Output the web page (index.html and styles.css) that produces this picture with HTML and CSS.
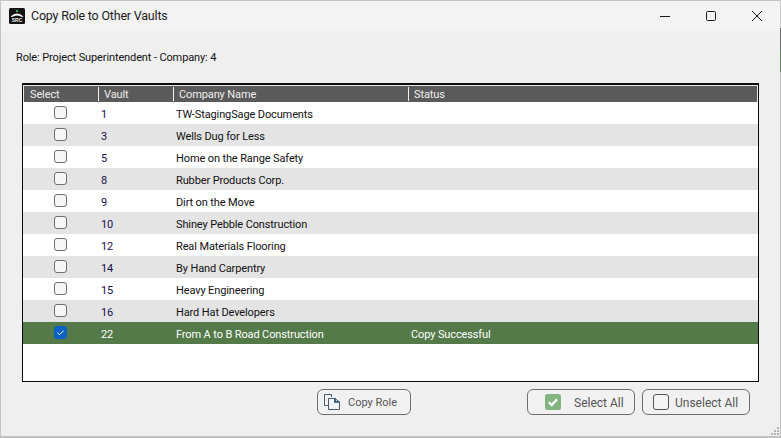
FILE: index.html
```html
<!DOCTYPE html>
<html lang="en">
<head>
<meta charset="utf-8">
<title>Copy Role to Other Vaults</title>
<link rel="stylesheet" href="styles.css">
</head>
<body>
<div class="window">
  <header class="titlebar">
    <svg class="logo" width="16" height="16" viewBox="0 0 16 16">
      <rect width="16" height="16" rx="1.5" fill="#141414"/>
      <rect x="7" y="2" width="2" height="2" fill="#35b04f"/>
      <path d="M1.5 8.5 Q8 2.5 14.5 8.5 L13 9 Q8 5.8 3 9Z" fill="#fff"/>
      <text class="logotext" x="8" y="14.2" text-anchor="middle">SRC</text>
    </svg>
    <span class="title">Copy Role to Other Vaults</span>
    <div class="controls">
      <svg class="ctl" width="12" height="12" viewBox="0 0 12 12"><path d="M1 6.5H11" stroke="#1a1a1a" stroke-width="1"/></svg>
      <svg class="ctl" width="12" height="12" viewBox="0 0 12 12"><rect x="1.5" y="1.5" width="9" height="9" rx="1" fill="none" stroke="#1a1a1a"/></svg>
      <svg class="ctl" width="12" height="12" viewBox="0 0 12 12"><path d="M1 1L11 11M11 1L1 11" stroke="#1a1a1a" stroke-width="1"/></svg>
    </div>
  </header>
  <main class="content">
    <p class="role">Role: Project Superintendent - Company: 4</p>
    <section class="grid">
      <div class="row head">
        <div class="hcell">Select</div>
        <div class="hcell sep">Vault</div>
        <div class="hcell sep">Company Name</div>
        <div class="hcell sep">Status</div>
      </div>
      <div class="row"><div class="cell chk"><span class="box"></span></div><div class="cell num">1</div><div class="cell name">TW-StagingSage Documents</div><div class="cell"></div></div>
      <div class="row alt"><div class="cell chk"><span class="box"></span></div><div class="cell num">3</div><div class="cell name">Wells Dug for Less</div><div class="cell"></div></div>
      <div class="row"><div class="cell chk"><span class="box"></span></div><div class="cell num">5</div><div class="cell name">Home on the Range Safety</div><div class="cell"></div></div>
      <div class="row alt"><div class="cell chk"><span class="box"></span></div><div class="cell num">8</div><div class="cell name">Rubber Products Corp.</div><div class="cell"></div></div>
      <div class="row"><div class="cell chk"><span class="box"></span></div><div class="cell num">9</div><div class="cell name">Dirt on the Move</div><div class="cell"></div></div>
      <div class="row alt"><div class="cell chk"><span class="box"></span></div><div class="cell num">10</div><div class="cell name">Shiney Pebble Construction</div><div class="cell"></div></div>
      <div class="row"><div class="cell chk"><span class="box"></span></div><div class="cell num">12</div><div class="cell name">Real Materials Flooring</div><div class="cell"></div></div>
      <div class="row alt"><div class="cell chk"><span class="box"></span></div><div class="cell num">14</div><div class="cell name">By Hand Carpentry</div><div class="cell"></div></div>
      <div class="row"><div class="cell chk"><span class="box"></span></div><div class="cell num">15</div><div class="cell name">Heavy Engineering</div><div class="cell"></div></div>
      <div class="row alt"><div class="cell chk"><span class="box"></span></div><div class="cell num">16</div><div class="cell name">Hard Hat Developers</div><div class="cell"></div></div>
      <div class="row selected"><div class="cell chk"><span class="box checked"><svg width="13" height="13" viewBox="0 0 13 13"><path d="M3.5 6.8L5.6 8.7L9.6 4.6" fill="none" stroke="#fff" stroke-width="1"/></svg></span></div><div class="cell num">22</div><div class="cell name">From A to B Road Construction</div><div class="cell status">Copy Successful</div></div>
    </section>
    <footer class="actions">
      <button class="btn copy" type="button">
        <svg width="16" height="16" viewBox="0 0 16 16"><path d="M7.5 3V0.5H0.5V11.5H4.5" fill="none" stroke="#4a5c6a" stroke-width="1"/><path d="M4.5 4.5H11L15.5 8V15.5H4.5Z" fill="#f4f4f4" stroke="#4a5c6a" stroke-width="1"/><path d="M11 4.5V8H15.5" fill="none" stroke="#12486e" stroke-width="1.6"/></svg>
        <span class="copylabel">Copy Role</span>
      </button>
      <button class="btn selectall" type="button">
        <svg width="16" height="16" viewBox="0 0 16 16"><rect width="16" height="16" rx="2.5" fill="#82b47f"/><path d="M3.8 8.2L6.7 11L12 5.4" fill="none" stroke="#fff" stroke-width="2.4"/></svg>
        <span class="label">Select All</span>
      </button>
      <button class="btn unselect" type="button">
        <span class="bigbox"></span>
        <span class="label">Unselect All</span>
      </button>
    </footer>
  </main>
  <svg class="grip" width="10" height="10" viewBox="0 0 10 10" fill="#b4b4b4"><rect x="7" y="1" width="2" height="2"/><rect x="4" y="4" width="2" height="2"/><rect x="7" y="4" width="2" height="2"/><rect x="1" y="7" width="2" height="2"/><rect x="4" y="7" width="2" height="2"/><rect x="7" y="7" width="2" height="2"/></svg>
</div>
</body>
</html>
```
FILE: styles.css
```css
* { box-sizing: border-box; }
html, body { margin: 0; height: 100%; overflow: hidden; }
body {
  background: linear-gradient(to bottom, #c8c8c8 0 28px, #6e6e6e 28px 50px, #5f8a5a 50px 72px, #c0c0c0 72px);
  font-family: Roboto, "Liberation Sans", sans-serif;
  font-size: 11px;
  letter-spacing: -0.12px;
  color: #111;
}
.window {
  position: relative;
  width: 780px; height: 437px;
  background: #efefef;
  border: 1px solid #c4c4c4;
  border-right: 0;
  display: flex; flex-direction: column;
}
.titlebar {
  height: 30px; flex: none;
  background: #f3f3f3;
  display: flex; align-items: center;
  padding-left: 8px;
}
.logo { margin-right: 6px; }
.logotext { font-family: "Liberation Sans", sans-serif; font-size: 5px; font-weight: 700; fill: #eee; letter-spacing: 0; }
.title { font-size: 12.5px; letter-spacing: -0.2px; color: #1c1c1c; padding-bottom: 2px; }
.controls { margin-left: auto; display: flex; gap: 34px; padding-right: 17px; }
.content { flex: 1; display: flex; flex-direction: column; padding: 0 21px; }
.role { margin: 19px 0 0 -6px; height: 15px; line-height: 15px; }
.grid {
  margin-top: 18px;
  height: 299px;
  background: #fff;
  border: 1px solid #0a0a0a;
  border-top-width: 2px;
  display: flex; flex-direction: column;
}
.row {
  display: grid;
  grid-template-columns: 75px 75px 235px 1fr;
  height: 22px; flex: none;
  align-items: center;
}
.head {
  height: 17px;
  grid-template-columns: 74px 75px 235px 1fr;
  background: #5a5a5a;
  border: 1px solid #e8e8e8;
  border-bottom: 0;
  color: #eee;
}
.hcell { padding: 1px 0 0 6px; line-height: 14px; }
.sep { border-left: 1.5px solid #f0f0f0; padding: 1px 0 0 5px; height: 14px; line-height: 13px; }
.alt { background: #e4e4e4; }
.selected { background: #547a4a; color: #fff; }
.cell { padding: 2px 0 0 3px; line-height: 22px; height: 22px; }
.chk { padding: 4px 0 0 31px; }
.box {
  width: 13px; height: 13px;
  border: 1.5px solid #6f6f6f;
  border-radius: 3px;
  background: #f6f6f6;
  display: block;
}
.box.checked { border: 0; background: #0b62c4; }
.box svg { display: block; }
.num { color: #15104e; }
.selected .num { color: #fff; }
.actions { display: flex; margin-top: 7px; padding-left: 295px; }
.btn {
  height: 26px;
  background: #f1f1f1;
  border: 1px solid #6e6e6e;
  border-radius: 6px;
  font: inherit;
  color: #555;
  padding: 0;
  display: flex; align-items: center;
}
.label { font-size: 12px; letter-spacing: 0; padding-top: 2px; }
.copylabel { padding-top: 1px; }
.copy { width: 94px; padding-left: 6px; gap: 8px; }
.selectall { width: 108px; margin-left: 116px; padding-left: 17px; gap: 13px; }
.unselect { width: 108px; margin-left: 7px; padding-left: 10px; gap: 6px; }
.bigbox { width: 16px; height: 16px; border: 1.5px solid #555; border-radius: 3px; background: #f4f4f4; }
.grip { position: absolute; right: 0; bottom: 0; }
```
